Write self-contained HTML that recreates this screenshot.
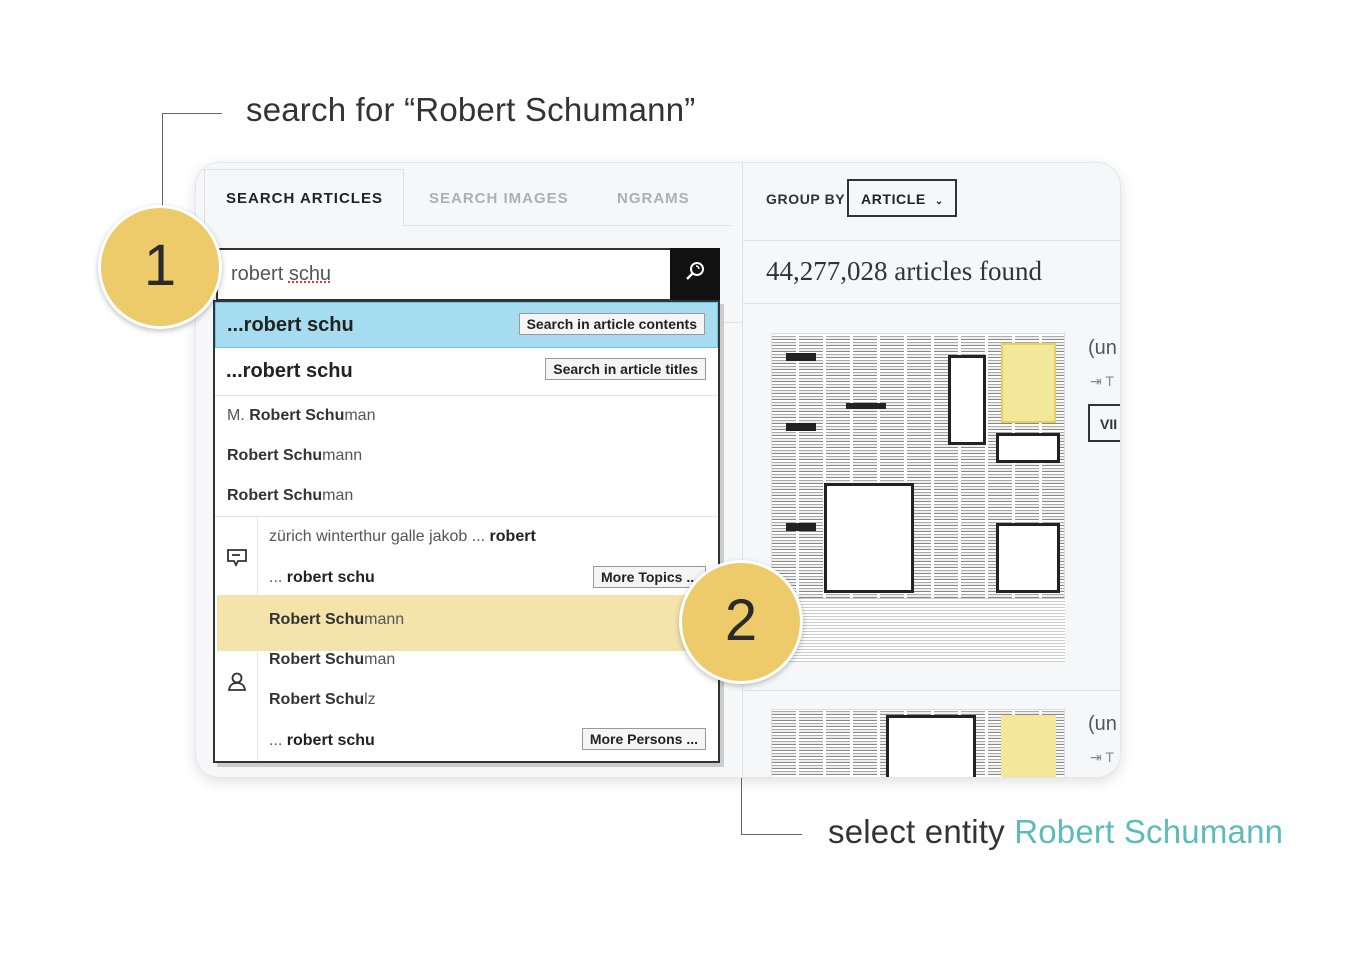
<!DOCTYPE html>
<html><head><meta charset="utf-8"><style>
*{margin:0;padding:0;box-sizing:border-box}
body{width:1356px;height:970px;background:#fff;position:relative;overflow:hidden;font-family:"Liberation Sans",sans-serif;color:#333}
.a{position:absolute}
.card{left:195px;top:162px;width:926px;height:616px;background:#f6f7f9;border:1px solid #e4e6ea;border-radius:24px;overflow:hidden;box-shadow:0 4px 14px rgba(0,0,0,.12)}
.tab{font-size:15px;letter-spacing:1px;font-weight:bold}
.news{background:
repeating-linear-gradient(90deg,transparent 0 24px,#fff 24px 27px),
repeating-linear-gradient(0deg,#aaa 0 1px,#fff 1px 3px,#888 3px 4px,#eee 4px 6px);border:1px solid #ddd}
.blk{position:absolute;background:#fff;border:3px solid #222}
.bar{position:absolute;background:#222}
.row{position:absolute;left:0;right:0;font-size:16px}
.btn{position:absolute;background:#f5f5f5;border:1px solid #999;font-size:14px;font-weight:bold;padding:2px 7px;color:#222}
.circ{position:absolute;width:124px;height:124px;border-radius:50%;background:#eecb6a;border:3px solid #fff;box-shadow:0 2px 6px rgba(0,0,0,.25);font-size:58px;text-align:center;line-height:116px;color:#2a2a2a}
</style></head><body>
<div class="a" style="left:162px;top:113px;width:60px;height:1px;background:#666"></div>
<div class="a" style="left:162px;top:113px;width:1px;height:95px;background:#666"></div>
<div class="a" style="left:246px;top:91px;font-size:33px;color:#333;letter-spacing:.2px">search for “Robert Schumann”</div>
<div class="a" style="left:741px;top:778px;width:1px;height:56px;background:#666"></div>
<div class="a" style="left:741px;top:834px;width:61px;height:1px;background:#666"></div>
<div class="a" style="left:828px;top:813px;font-size:33px;color:#333;letter-spacing:.2px">select entity <span style="color:#5cbcbc">Robert Schumann</span></div>

<div class="a card">
 <div class="a" style="left:8px;top:6px;width:200px;height:57px;border:1px solid #dfe1e5;border-bottom:none;background:#f6f7f9"></div>
 <div class="a" style="left:208px;top:62px;width:327px;height:1px;background:#dfe1e5"></div>
 <div class="a tab" style="left:30px;top:27px;color:#222">SEARCH ARTICLES</div>
 <div class="a tab" style="left:233px;top:27px;color:#aab0b8">SEARCH IMAGES</div>
 <div class="a tab" style="left:421px;top:27px;color:#aab0b8">NGRAMS</div>
 <div class="a" style="left:546px;top:0;width:1px;height:616px;background:#dfe1e5"></div>
 <div class="a" style="left:523px;top:159px;width:23px;height:1px;background:#dfe1e5"></div>
 <div class="a tab" style="left:570px;top:28px;font-size:14px;letter-spacing:.6px;color:#333">GROUP BY</div>
 <div class="a" style="left:651px;top:16px;width:110px;height:38px;border:2px solid #333"></div>
 <div class="a tab" style="left:665px;top:28px;font-size:14px;letter-spacing:.6px;color:#222">ARTICLE &nbsp;<span style="font-size:10px">&#8964;</span></div>
 <div class="a" style="left:547px;top:77px;width:379px;height:1px;background:#dfe1e5"></div>
 <div class="a" style="left:570px;top:93px;font-family:'Liberation Serif',serif;font-size:27px;color:#333">44,277,028 articles found</div>
 <div class="a" style="left:547px;top:140px;width:379px;height:1px;background:#dfe1e5"></div>
 <div class="a news" style="left:575px;top:170px;width:294px;height:329px"></div>
 <div class="blk" style="left:628px;top:320px;width:90px;height:110px"></div>
 <div class="blk" style="left:752px;top:192px;width:38px;height:90px"></div>
 <div class="bar" style="left:590px;top:190px;width:30px;height:8px"></div>
 <div class="bar" style="left:590px;top:260px;width:30px;height:8px"></div>
 <div class="bar" style="left:590px;top:360px;width:30px;height:8px"></div>
 <div class="bar" style="left:650px;top:240px;width:40px;height:6px"></div>
 <div class="blk" style="left:800px;top:270px;width:64px;height:30px"></div>
 <div class="blk" style="left:800px;top:360px;width:64px;height:70px"></div>
 <div class="a" style="left:575px;top:435px;width:294px;height:64px;background:repeating-linear-gradient(0deg,#ccc 0 1px,#fff 1px 3px)"></div>
 <div class="a" style="left:805px;top:180px;width:55px;height:80px;background:#f3e79a;border:2px solid #e8d060"></div>
 <div class="a" style="left:547px;top:527px;width:379px;height:1px;background:#dfe1e5"></div>
 <div class="a news" style="left:575px;top:546px;width:294px;height:70px"></div>
 <div class="blk" style="left:690px;top:552px;width:90px;height:70px"></div>
 <div class="a" style="left:805px;top:552px;width:55px;height:64px;background:#f3e79a"></div>
 <div class="a" style="left:892px;top:174px;font-size:20px;color:#555">(un</div>
 <div class="a" style="left:894px;top:210px;font-size:14px;color:#888">&#8677; T</div>
 <div class="a" style="left:892px;top:241px;width:40px;height:38px;border:2px solid #333;font-size:14px;font-weight:bold;padding:10px 0 0 10px">VII</div>
 <div class="a" style="left:892px;top:550px;font-size:20px;color:#555">(un</div>
 <div class="a" style="left:894px;top:586px;font-size:14px;color:#888">&#8677; T</div>
 <div class="a" style="left:20px;top:85px;width:504px;height:53px;background:#fff;border:2px solid #333"></div>
 <div class="a" style="left:35px;top:100px;font-size:20px;color:#555">robert <span style="text-decoration:underline dotted #e33">schu</span></div>
 <div class="a" style="left:474px;top:85px;width:50px;height:53px;background:#111"></div>
 <svg class="a" style="left:488px;top:98px" width="22" height="22" viewBox="0 0 22 22"><circle cx="13" cy="8" r="6" fill="none" stroke="#fff" stroke-width="2"/><path d="M9 12 L3 18" stroke="#fff" stroke-width="2.4"/><path d="M12 5 a3 3 0 0 1 3 3" stroke="#fff" stroke-width="1.5" fill="none"/></svg>
 <div class="a" style="left:17px;top:137px;width:507px;height:463px;background:#fff;border:2px solid #333;box-shadow:4px 4px 0 #ccc;overflow:hidden">
  <div class="row" style="top:0;height:46px;background:#a5dcef;border:1px solid #6cc6e8"><b style="position:absolute;left:11px;top:11px;font-size:20px;color:#222">...robert schu</b>
   <div class="btn" style="right:12px;top:10px">Search in article contents</div></div>
  <div class="row" style="top:46px;height:48px;border-bottom:1px solid #e2e4e8"><b style="position:absolute;left:11px;top:12px;font-size:20px;color:#222">...robert schu</b>
   <div class="btn" style="right:12px;top:10px">Search in article titles</div></div>
  <div class="row" style="top:105px;left:12px;color:#555">M. <b style="color:#333">Robert Schu</b>man</div>
  <div class="row" style="top:145px;left:12px;color:#555"><b style="color:#333">Robert Schu</b>mann</div>
  <div class="row" style="top:185px;left:12px;color:#555"><b style="color:#333">Robert Schu</b>man</div>
  <div class="a" style="left:0;right:0;top:214px;height:1px;background:#e2e4e8"></div>
  <div class="a" style="left:42px;top:215px;width:1px;height:250px;background:#e2e4e8"></div>
  <div class="a" style="left:2px;top:293px;width:490px;height:56px;background:#f4e4ab"></div>
  <div class="row" style="top:226px;left:54px;color:#555">zürich winterthur galle jakob ... <b style="color:#222">robert</b></div>
  <div class="row" style="top:267px;left:54px;color:#555">... <b style="color:#222">robert schu</b></div>
  <div class="btn" style="right:12px;top:264px">More Topics ...</div>
  <div class="row" style="top:309px;left:54px;color:#555"><b style="color:#333">Robert Schu</b>mann</div>
  <div class="row" style="top:349px;left:54px;color:#555"><b style="color:#333">Robert Schu</b>man</div>
  <div class="row" style="top:389px;left:54px;color:#555"><b style="color:#333">Robert Schu</b>lz</div>
  <div class="row" style="top:430px;left:54px;color:#555">... <b style="color:#222">robert schu</b></div>
  <div class="btn" style="right:12px;top:426px">More Persons ...</div>
  <svg class="a" style="left:12px;top:247px" width="20" height="18" viewBox="0 0 20 18"><path d="M1 1H19V12H11L9 16L7 12H1Z" fill="none" stroke="#333" stroke-width="1.8"/><path d="M5 6H13" stroke="#333" stroke-width="1.8"/></svg>
  <svg class="a" style="left:12px;top:370px" width="20" height="20" viewBox="0 0 20 20"><circle cx="10" cy="6" r="4.5" fill="none" stroke="#333" stroke-width="1.8"/><path d="M2 18Q3 11 10 11Q17 11 18 18Z" fill="none" stroke="#333" stroke-width="1.8"/></svg>
 </div>
</div>
<div class="circ" style="left:98px;top:205px">1</div>
<div class="circ" style="left:679px;top:560px">2</div>
</body></html>
